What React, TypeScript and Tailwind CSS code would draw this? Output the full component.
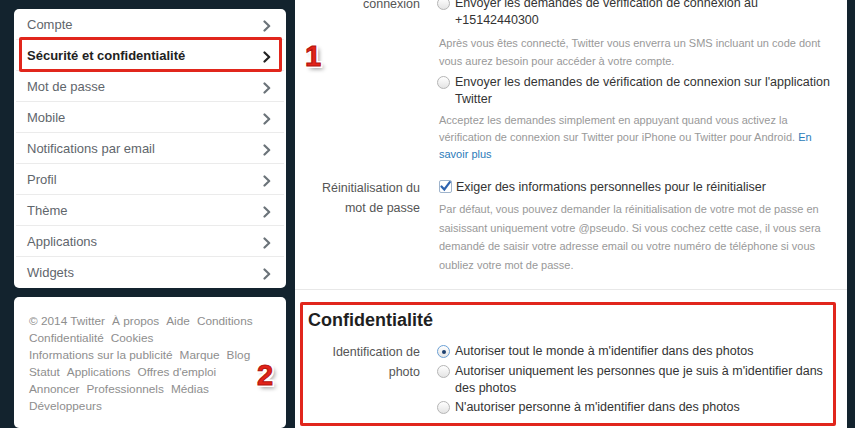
const navItems = [
  "Compte",
  "Sécurité et confidentialité",
  "Mot de passe",
  "Mobile",
  "Notifications par email",
  "Profil",
  "Thème",
  "Applications",
  "Widgets",
];

const footerLines = [
  ["© 2014 Twitter", "À propos", "Aide", "Conditions"],
  ["Confidentialité", "Cookies"],
  ["Informations sur la publicité", "Marque", "Blog"],
  ["Statut", "Applications", "Offres d'emploi"],
  ["Annoncer", "Professionnels", "Médias"],
  ["Développeurs"],
];

function Chevron({ dark }: { dark?: boolean }) {
  return (
    <svg width="8" height="12" viewBox="0 0 8 12" className="mt-[2px] shrink-0">
      <path
        d="M1.5 1.5 L6.2 6 L1.5 10.5"
        fill="none"
        stroke={dark ? "#222" : "#6b7379"}
        strokeWidth="2.2"
        strokeLinecap="round"
        strokeLinejoin="round"
      />
    </svg>
  );
}

function Radio({ checked }: { checked?: boolean }) {
  return (
    <span
      className={
        "mt-[2px] flex h-[13px] w-[13px] shrink-0 items-center justify-center rounded-full border bg-gradient-to-b from-white to-[#e4e4e4] " +
        (checked ? "border-[#6a9fd4]" : "border-[#b5b5b5]")
      }
    >
      {checked && <span className="h-[4px] w-[4px] rounded-full bg-[#1c3f6e]" />}
    </span>
  );
}

function Checkbox() {
  return (
    <span className="mt-[1px] flex h-[13px] w-[13px] shrink-0 items-center justify-center rounded-[2px] border border-[#9fb4cc] bg-white">
      <svg width="11" height="11" viewBox="0 0 11 11">
        <path d="M1.5 5.5 L4.3 8.5 L9.8 1.2" fill="none" stroke="#2d63b0" strokeWidth="2.2" strokeLinecap="round" />
      </svg>
    </span>
  );
}

function Badge({ n, className }: { n: string; className: string }) {
  return (
    <span
      className={
        "absolute font-bold leading-none text-[#e2231a] [-webkit-text-stroke:1px_#b3140d] [text-shadow:2px_2px_0_#fff,-2px_-2px_0_#fff,2px_-2px_0_#fff,-2px_2px_0_#fff,0_2px_0_#fff,2px_0_0_#fff,0_-2px_0_#fff,-2px_0_0_#fff,3px_3px_4px_rgba(0,0,0,0.45)] " +
        className
      }
    >
      {n}
    </span>
  );
}

function Option({ checked, lines }: { checked?: boolean; lines: string[] }) {
  return (
    <div className="flex gap-[5px]">
      <Radio checked={checked} />
      <div className="text-[12.5px] leading-[17px] text-[#333]">
        {lines.map((l) => (
          <div key={l} className="whitespace-nowrap">
            {l}
          </div>
        ))}
      </div>
    </div>
  );
}

export default function App() {
  return (
    <div className="flex h-[428px] w-[855px] overflow-hidden bg-[#13232e] font-['Liberation_Sans',Arial,sans-serif]">
      <div className="ml-[14px] flex w-[272px] shrink-0 flex-col pt-[9px]">
        <div className="relative rounded-[5px] bg-white">
          {navItems.map((item, i) => (
            <div
              key={item}
              className={
                "relative mx-[2px] flex h-[31px] items-center justify-between pl-[11px] pr-[13px] pt-[1px] text-[13px] " +
                (i < navItems.length - 1 ? "border-b border-[#ebebeb] " : "") +
                (i === 1 ? "font-bold text-[#222]" : "text-[#5f666c]")
              }
            >
              <span>{item}</span>
              <Chevron dark={i === 1} />
              {i === 1 && (
                <span className="absolute -top-[3px] left-[3px] right-[2px] -bottom-[2px] rounded-[2px] border-[3px] border-[#e1261c]" />
              )}
            </div>
          ))}
        </div>

        <div className="relative mt-[9px] h-[140px] rounded-[5px] bg-white pl-[15px] pt-[16px] text-[11.8px] leading-[17px] text-[#8e8e8e]">
          {footerLines.map((line, i) => (
            <div key={i} className="flex gap-[7px] whitespace-nowrap">
              {line.map((l) => (
                <span key={l}>{l}</span>
              ))}
            </div>
          ))}
          <Badge n="2" className="left-[243px] top-[64px] text-[29px]" />
        </div>
      </div>

      <div className="relative ml-[9px] flex w-[552px] shrink-0 flex-col overflow-hidden bg-white">
        <Badge n="1" className="left-[10px] top-[42px] text-[29px]" />

        <div className="-mt-[26px] flex">
          <div className="w-[125px] shrink-0 text-right text-[12.5px] leading-[20px] text-[#555]">
            <div>Vérification de</div>
            <div>connexion</div>
          </div>
          <div className="ml-[17px] pt-[21px]">
            <Option lines={["Envoyer les demandes de vérification de connexion au", "+15142440300"]} />
            <div className="ml-[2px] mt-[5px] text-[11px] leading-[18px] text-[#999]">
              <div className="whitespace-nowrap">Après vous êtes connecté, Twitter vous enverra un SMS incluant un code dont</div>
              <div className="whitespace-nowrap">vous aurez besoin pour accéder à votre compte.</div>
            </div>
            <div className="mt-[4px]">
              <Option lines={["Envoyer les demandes de vérification de connexion sur l'application", "Twitter"]} />
            </div>
            <div className="ml-[2px] mt-[4px] text-[11px] leading-[17px] text-[#999]">
              <div className="whitespace-nowrap">Acceptez les demandes simplement en appuyant quand vous activez la</div>
              <div className="whitespace-nowrap">
                vérification de connexion sur Twitter pour iPhone ou Twitter pour Android.{" "}
                <span className="text-[#2b7bb9]">En</span>
              </div>
              <div className="text-[#2b7bb9]">savoir plus</div>
            </div>
          </div>
        </div>

        <div className="mt-[15px] flex border-b border-[#e8e8e8] pb-[15px]">
          <div className="w-[125px] shrink-0 text-right text-[12.5px] leading-[20px] text-[#555]">
            <div>Réinitialisation du</div>
            <div>mot de passe</div>
          </div>
          <div className="ml-[17px] pt-[1px]">
            <div className="flex gap-[4px] pl-[2px]">
              <Checkbox />
              <span className="whitespace-nowrap text-[12.5px] leading-[17px] text-[#333]">
                Exiger des informations personnelles pour le réinitialiser
              </span>
            </div>
            <div className="ml-[2px] mt-[4px] text-[11px] leading-[18.5px] text-[#999]">
              <div className="whitespace-nowrap">Par défaut, vous pouvez demander la réinitialisation de votre mot de passe en</div>
              <div className="whitespace-nowrap">saisissant uniquement votre @pseudo. Si vous cochez cette case, il vous sera</div>
              <div className="whitespace-nowrap">demandé de saisir votre adresse email ou votre numéro de téléphone si vous</div>
              <div className="whitespace-nowrap">oubliez votre mot de passe.</div>
            </div>
          </div>
        </div>

        <div className="ml-[5px] mr-[11px] mt-[12px] h-[124px] shrink-0 rounded-[2px] border-[3px] border-[#e1261c] pt-[4px]">
          <h2 className="pl-[5px] text-[18px] font-bold leading-[22px] text-[#1f1f1f]">Confidentialité</h2>
          <div className="mt-[11px] flex">
            <div className="w-[117px] shrink-0 text-right text-[12.5px] leading-[20px] text-[#555]">
              <div>Identification de</div>
              <div>photo</div>
            </div>
            <div className="ml-[17px] pt-[1px]">
              <Option checked lines={["Autoriser tout le monde à m'identifier dans des photos"]} />
              <div className="mt-[3px]">
                <Option lines={["Autoriser uniquement les personnes que je suis à m'identifier dans", "des photos"]} />
              </div>
              <div className="mt-[2px]">
                <Option lines={["N'autoriser personne à m'identifier dans des photos"]} />
              </div>
            </div>
          </div>
        </div>
      </div>
    </div>
  );
}
